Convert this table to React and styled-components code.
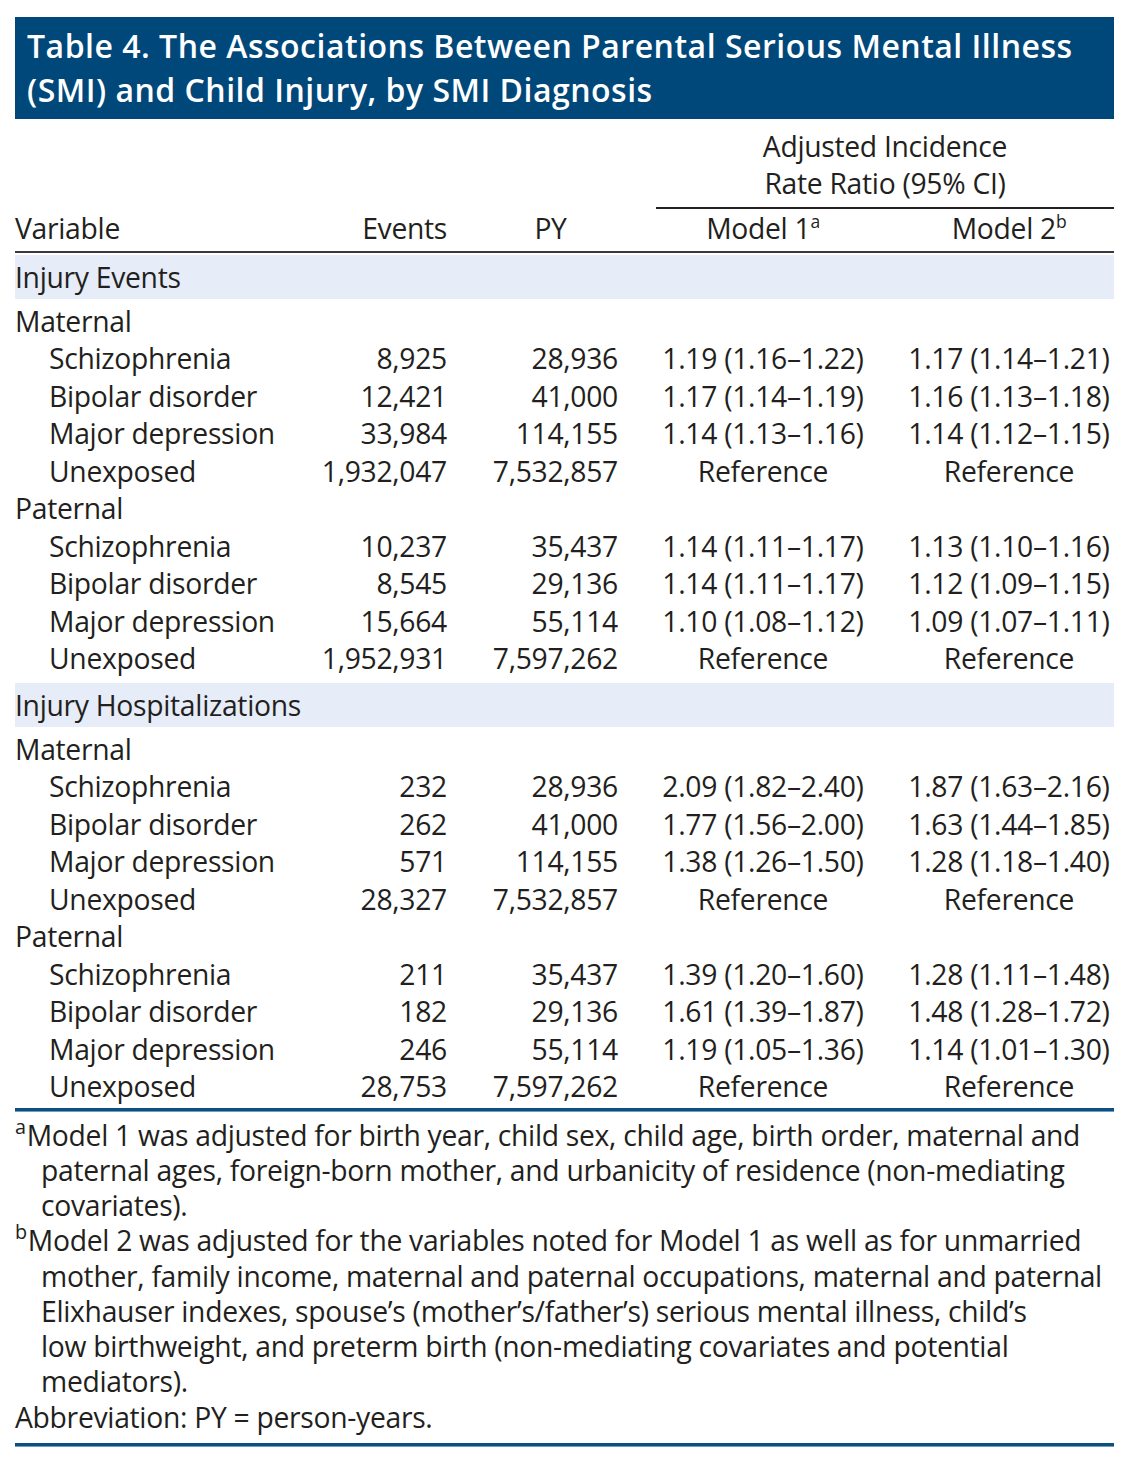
import React from "react";
import styled, { createGlobalStyle } from "styled-components";

const GlobalStyle = createGlobalStyle`
  html, body {
    margin: 0;
    padding: 0;
    background: #ffffff;
  }
  body {
    font-family: "Open Sans", "Noto Sans", "Liberation Sans", sans-serif;
    color: #231f20;
  }
`;

const sections = [
  {
    title: "Injury Events",
    groups: [
      {
        name: "Maternal",
        rows: [
          ["Schizophrenia", "8,925", "28,936", "1.19 (1.16–1.22)", "1.17 (1.14–1.21)"],
          ["Bipolar disorder", "12,421", "41,000", "1.17 (1.14–1.19)", "1.16 (1.13–1.18)"],
          ["Major depression", "33,984", "114,155", "1.14 (1.13–1.16)", "1.14 (1.12–1.15)"],
          ["Unexposed", "1,932,047", "7,532,857", "Reference", "Reference"],
        ],
      },
      {
        name: "Paternal",
        rows: [
          ["Schizophrenia", "10,237", "35,437", "1.14 (1.11–1.17)", "1.13 (1.10–1.16)"],
          ["Bipolar disorder", "8,545", "29,136", "1.14 (1.11–1.17)", "1.12 (1.09–1.15)"],
          ["Major depression", "15,664", "55,114", "1.10 (1.08–1.12)", "1.09 (1.07–1.11)"],
          ["Unexposed", "1,952,931", "7,597,262", "Reference", "Reference"],
        ],
      },
    ],
  },
  {
    title: "Injury Hospitalizations",
    groups: [
      {
        name: "Maternal",
        rows: [
          ["Schizophrenia", "232", "28,936", "2.09 (1.82–2.40)", "1.87 (1.63–2.16)"],
          ["Bipolar disorder", "262", "41,000", "1.77 (1.56–2.00)", "1.63 (1.44–1.85)"],
          ["Major depression", "571", "114,155", "1.38 (1.26–1.50)", "1.28 (1.18–1.40)"],
          ["Unexposed", "28,327", "7,532,857", "Reference", "Reference"],
        ],
      },
      {
        name: "Paternal",
        rows: [
          ["Schizophrenia", "211", "35,437", "1.39 (1.20–1.60)", "1.28 (1.11–1.48)"],
          ["Bipolar disorder", "182", "29,136", "1.61 (1.39–1.87)", "1.48 (1.28–1.72)"],
          ["Major depression", "246", "55,114", "1.19 (1.05–1.36)", "1.14 (1.01–1.30)"],
          ["Unexposed", "28,753", "7,597,262", "Reference", "Reference"],
        ],
      },
    ],
  },
];

const Page = styled.div`
  width: 1099px;
  padding: 17px 0 0 15px;
`;

const TitleBar = styled.div`
  background: #00477a;
  color: #ffffff;
  font-weight: 600;
  font-size: 32px;
  line-height: 44px;
  letter-spacing: 0.5px;
  padding: 7px 12px 7px 12px;
  white-space: nowrap;
`;

const Grid = styled.div`
  display: grid;
  grid-template-columns: 295px 137px 171px 272px 224px;
  font-size: 28.3px;
  letter-spacing: -0.3px;
  line-height: 37.5px;
`;

const SpanHead = styled.div`
  grid-column: 4 / 6;
  margin: 9px 0 0 38px;
  padding-bottom: 5px;
  border-bottom: 2px solid #231f20;
  text-align: center;
  line-height: 37px;
`;

const HeadCell = styled.div`
  padding-top: 1px;
  padding-bottom: 3px;
  border-bottom: 2px solid #3a3a3a;
  white-space: nowrap;
  text-align: ${(p) => p.$align || "left"};
  padding-left: ${(p) => p.$pl || 0}px;
`;

const Band = styled.div`
  grid-column: 1 / -1;
  background: #e6ecf8;
  height: 44px;
  line-height: 44px;
  margin: ${(p) => (p.$first ? "2px" : "5px")} 0 4px 0;
  white-space: nowrap;
`;

const Cell = styled.div`
  white-space: nowrap;
  text-align: ${(p) => p.$align || "left"};
  padding-left: ${(p) => p.$pl || 0}px;
  grid-column: ${(p) => (p.$full ? "1 / -1" : "auto")};
`;

const Sup = styled.sup`
  font-size: 0.62em;
  line-height: 0;
  vertical-align: 0.6em;
`;

const Rule = styled.div`
  height: 3px;
  background: #0d4f7f;
  border-bottom: 1px solid #6f9cc0;
  margin-top: ${(p) => p.$mt || 0}px;
`;

const Notes = styled.div`
  font-size: 28.3px;
  letter-spacing: -0.3px;
  line-height: 35.25px;
  padding-top: 6px;
`;

const Note = styled.div`
  padding-left: ${(p) => (p.$flat ? 0 : 26)}px;
  text-indent: ${(p) => (p.$flat ? 0 : -26)}px;
  white-space: nowrap;
`;

const NoteSup = styled.sup`
  font-size: 0.7em;
  line-height: 0;
  vertical-align: 0.6em;
  margin-right: 1px;
`;

function DataRow({ row }) {
  const [label, events, py, m1, m2] = row;
  return (
    <>
      <Cell $pl={34}>{label}</Cell>
      <Cell $align="right">{events}</Cell>
      <Cell $align="right">{py}</Cell>
      <Cell $align="center" $pl={18}>{m1}</Cell>
      <Cell $align="center" $pl={14}>{m2}</Cell>
    </>
  );
}

export default function App() {
  return (
    <>
      <GlobalStyle />
      <Page>
        <TitleBar>
          Table 4. The Associations Between Parental Serious Mental Illness
          <br />
          (SMI) and Child Injury, by SMI Diagnosis
        </TitleBar>
        <Grid>
          <SpanHead>
            Adjusted Incidence
            <br />
            Rate Ratio (95% CI)
          </SpanHead>
          <HeadCell>Variable</HeadCell>
          <HeadCell $align="right">Events</HeadCell>
          <HeadCell $align="center" $pl={36}>PY</HeadCell>
          <HeadCell $align="center" $pl={18}>
            Model 1<Sup>a</Sup>
          </HeadCell>
          <HeadCell $align="center" $pl={14}>
            Model 2<Sup>b</Sup>
          </HeadCell>
          {sections.map((s, si) => (
            <React.Fragment key={s.title}>
              <Band $first={si === 0}>{s.title}</Band>
              {s.groups.map((g) => (
                <React.Fragment key={g.name}>
                  <Cell $full>{g.name}</Cell>
                  {g.rows.map((r) => (
                    <DataRow key={r[0]} row={r} />
                  ))}
                </React.Fragment>
              ))}
            </React.Fragment>
          ))}
        </Grid>
        <Rule $mt={2} />
        <Notes>
          <Note>
            <NoteSup>a</NoteSup>Model 1 was adjusted for birth year, child sex, child age, birth order, maternal and
            <br />
            paternal ages, foreign-born mother, and urbanicity of residence (non-mediating
            <br />
            covariates).
          </Note>
          <Note>
            <NoteSup>b</NoteSup>Model 2 was adjusted for the variables noted for Model 1 as well as for unmarried
            <br />
            mother, family income, maternal and paternal occupations, maternal and paternal
            <br />
            Elixhauser indexes, spouse’s (mother’s/father’s) serious mental illness, child’s
            <br />
            low birthweight, and preterm birth (non-mediating covariates and potential
            <br />
            mediators).
          </Note>
          <Note $flat>Abbreviation: PY = person-years.</Note>
        </Notes>
        <Rule $mt={8} />
      </Page>
    </>
  );
}
